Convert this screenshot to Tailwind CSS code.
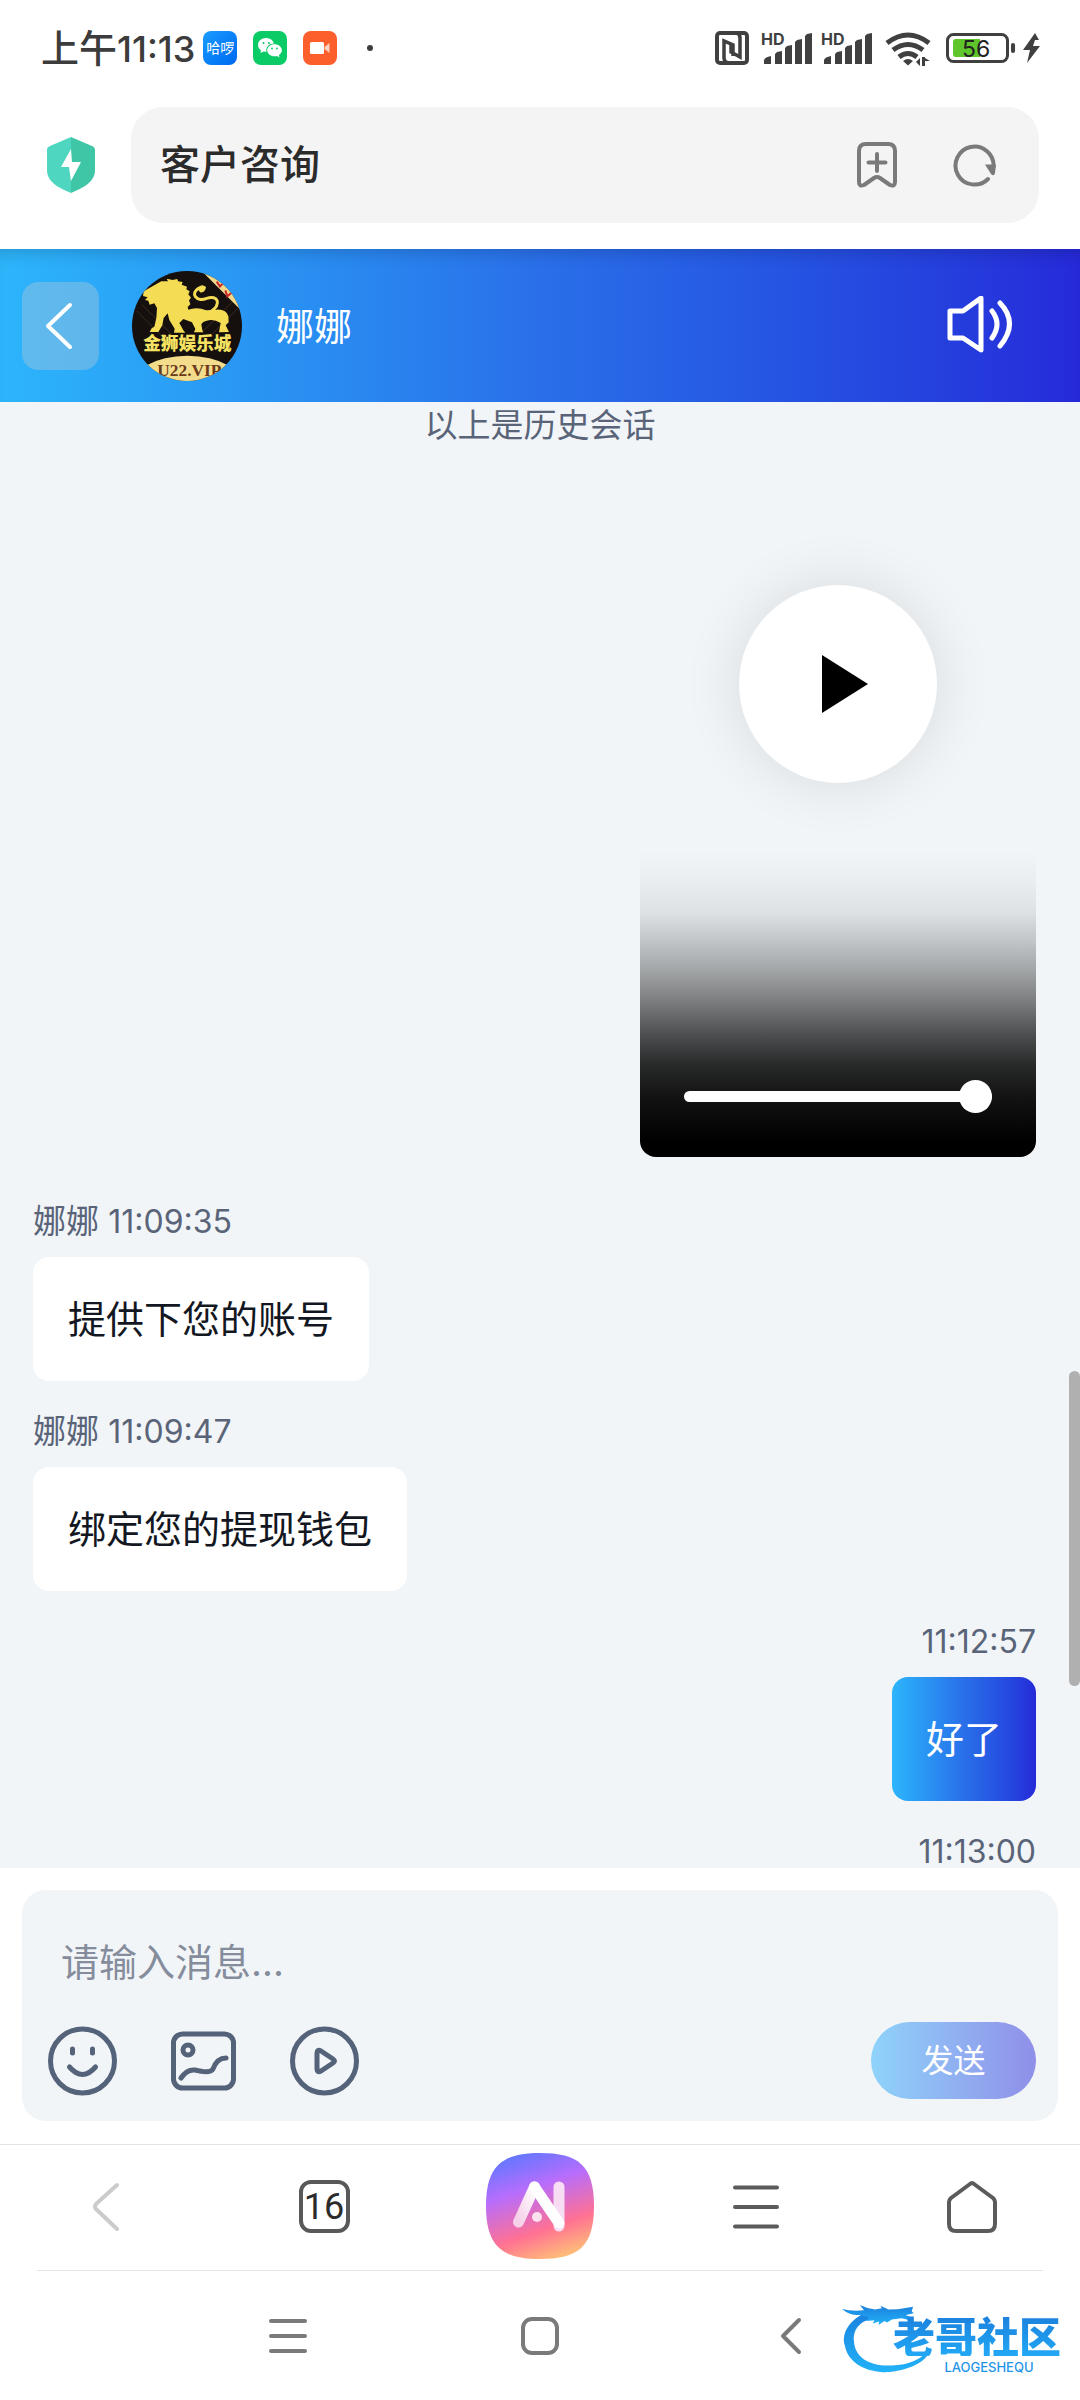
<!DOCTYPE html>
<html lang="zh-CN">
<head>
<meta charset="utf-8">
<meta name="viewport" content="width=device-width, initial-scale=1">
<title>客户咨询</title>
<script src="https://cdn.jsdelivr.net/npm/@tailwindcss/browser@4"></script>
</head>
<body class="flex h-screen flex-col overflow-hidden bg-white font-[Inter,'Noto_Sans_CJK_SC',sans-serif] text-[#2b2b2b]">

  <!-- Status bar -->
  <div class="flex h-24 shrink-0 items-center justify-between pr-10 pl-[41px]">
    <div class="flex items-center">
      <span class="mr-2 text-[38px] leading-[48px] font-medium text-[#3c3c3c]">上午<span class="text-[36px]">11:13</span></span>
      <div class="flex items-center gap-4">
        <span class="flex size-[34px] items-center justify-center rounded-lg bg-linear-to-br from-[#1d9bff] to-[#0068f0] text-[14px] leading-none text-white">哈啰</span>
        <svg class="size-[34px]" viewBox="0 0 34 34"><rect width="34" height="34" rx="8" fill="#0acb65"/><g fill="#fff"><path d="M13 7C8.500 7 5 10 5 14c0 2.200 1.200 4 3 5.200l-.6 2.800 3.200-1.500c1 .2 1.800.3 2.800.3-.8-5.300 3.500-8.500 7.500-8.300C20 9.300 17 7 13 7z"/><path d="M21.500 13.300c-4.200 0-7.300 2.700-7.300 6s3.100 6 7.300 6c.9 0 1.700-.1 2.500-.3l2.500 1.400-.6-2.500c1.900-1.100 3-2.700 3-4.600 0-3.300-3.200-6-7.400-6z"/></g><g fill="#0acb65"><circle cx="10.500" cy="12" r="1"/><circle cx="16" cy="12" r="1"/><circle cx="19" cy="17.500" r=".9"/><circle cx="24" cy="17.500" r=".9"/></g></svg>
        <svg class="size-[34px]" viewBox="0 0 34 34"><rect width="34" height="34" rx="8" fill="#fc5f2b"/><rect x="7" y="11" width="14" height="12" rx="1.500" fill="#fff"/><path d="M21.500 16l5-4v10l-5-4z" fill="#ffd0bd"/></svg>
      </div>
      <span class="ml-[30px] size-[6px] rounded-full bg-[#3c3c3c]"></span>
    </div>
    <svg class="h-9 w-[326px]" viewBox="714 30 326 36" fill="#404040">
      <rect x="717" y="33" width="30" height="30" rx="3" fill="none" stroke="#404040" stroke-width="4"/>
      <path d="M728 63q-4-1-4-5V41l9 4v11M737 33q3 1 3 5v19l-9-5v-9" fill="none" stroke="#404040" stroke-width="3.500"/>
      <g id="sig"><text x="761" y="44.500" font-family="Inter" font-size="16" font-weight="700">HD</text>
      <path d="M764 64v-4q1-3 7-4v8zM775 64V54l2-2 5-1v13zM785 64V48l2-2 5-1v19zM795 64V42l2-2 5-1v25zM805 64V36l2-2 5-1v31z"/></g>
      <use href="#sig" x="60"/>
      <g fill="none" stroke="#404040" stroke-width="5"><path d="M887 43q21-16 42 0"/><path d="M893 50q15-11 30 0"/><path d="M899 57q9-7 18 0"/></g>
      <path d="M903 61q5-4 10 0l-5 4.500zM920 58v8l-4-4zM922 66V57l0 0 3 0v9zM925 58l5 3h-5z"/>
      <rect x="947.500" y="34.500" width="60" height="27" rx="6" fill="none" stroke="#404040" stroke-width="3"/>
      <path d="M956 39h24v18h-24q-3 0-3-3V42q0-3 3-3z" fill="#5ec62a"/>
      <text x="962" y="57" font-family="Inter" font-size="23" fill="#222">56</text>
      <rect x="1011" y="43" width="4" height="10" rx="2"/>
      <path d="M1035 33l-12 17h7l-3 13 13-17h-7l2-6h4z"/>
    </svg>
  </div>

  <!-- Browser address bar -->
  <div class="flex shrink-0 items-center pt-[11px] pr-[41px] pb-[26px] pl-[47px]">
    <svg class="h-[56px] w-[48px] shrink-0" viewBox="0 0 48 56"><path d="M24 0l21 9q3 1 3 4v20c0 12-12 18-24 23z" fill="#3fc6a6"/><path d="M24 0L3 9Q0 10 0 13v20c0 12 12 18 24 23z" fill="#4fd6c0"/><path d="M24 12L14 30h8l2 14 10-19h-9z" fill="#fff"/></svg>
    <div class="ml-9 flex h-[116px] flex-1 items-center rounded-[32px] bg-[#f4f4f4] pr-[41px] pl-[29px]">
      <h1 class="flex-1 text-[40px] leading-[52px] font-medium">客户咨询</h1>
      <button aria-label="收藏" class="mr-[54px]"><svg class="h-[48px] w-[42px]" viewBox="0 0 42 48" fill="none" stroke="#7a7a7a" stroke-width="4" stroke-linecap="round" stroke-linejoin="round"><path d="M3 10q0-7 7-7h22q7 0 7 7v31q0 5-5 3l-10-7q-3-2-6 0l-10 7q-5 2-5-3zM21 13v17M12.500 21.500h17"/></svg></button>
      <button aria-label="刷新"><svg class="size-[46px]" viewBox="0 0 46 46" fill="none"><path d="M36 37A19 19 0 1 1 41.500 25" stroke="#7a7a7a" stroke-width="4" stroke-linecap="round"/><path d="M33 22.500h11l-1 8.500q-1 4-4 1z" fill="#7a7a7a"/></svg></button>
    </div>
  </div>

  <!-- Agent header -->
  <header class="flex h-[153px] shrink-0 items-center bg-linear-to-r from-[#2db5fb] via-[#2a6fe9] to-[#2629d9] pr-[66px] pl-[22px] shadow-[inset_0_14px_18px_-12px_rgba(0,0,0,0.2)]">
    <button aria-label="返回" class="flex h-[88px] w-[77px] items-center justify-center rounded-2xl bg-[#9fc6dc]/45">
      <svg class="h-[48px] w-[34px]" viewBox="0 0 34 48" fill="none" stroke="#fff" stroke-width="4" stroke-linecap="round" stroke-linejoin="round"><path d="M26 3L4 24l22 21"/></svg>
    </button>
    <svg class="ml-[33px] size-[110px] rounded-full" viewBox="396 90 330 330" role="img" aria-label="金狮娱乐城">
      <rect x="396" y="90" width="330" height="330" fill="#15100d"/>
      <path d="M410 210l75 75M425 190l90 90M716 200l-80 80M700 180l-90 90" stroke="#5b452a" stroke-width="3" opacity=".6"/>
      <path d="M605 90l121 121V90z" fill="#f3d98a"/>
      <path d="M650 122l10 14 12-12M676 148l6 18 14-12M664 118l4 10" stroke="#c8262a" stroke-width="6" fill="none"/>
      <g fill="#f5dc55">
        <path d="M484 121l20 0-4-8 18 4 14-3 2 7 14 2-3 8 16 6-2 8 10 6-4 9 8 10-6 8 4 12-8 8 2 8q25-10 54 2 15-2 30-2 30-2 36 20l1 18-9 9 10 20-30 1 2-12 3-16q-20-12-36-8-18 3-22 12l3 18 3 6-28 0 4-10-10-20-26-10-12 12 12 22 6 7-34 0 2-12-16-26-5-20-12 14-4 22-12 20-26 0 6-11 8-5 6-26 2-30-8-14-14 4-4-12-10-2 8-8-14-4 2-14z"/>
        <path d="M632 212C665 190 655 160 620 172C588 185 570 156 596 142" fill="none" stroke="#f5dc55" stroke-width="9" stroke-linecap="round"/>
        <path d="M592 140q14-14 26-2-2 18-18 16z"/>
      </g>
      <ellipse cx="562" cy="445" rx="175" ry="101" fill="#f3dd8c"/>
      <text x="562" y="328" text-anchor="middle" font-family="Noto Sans CJK SC" font-weight="900" font-size="53" fill="#f5e262">金狮娱乐城</text>
      <text x="568" y="406" text-anchor="middle" font-family="Liberation Serif" font-weight="700" font-size="52" fill="#6b3a1a">U22.VIP</text>
    </svg>
    <h2 class="ml-[34px] flex-1 text-[38px] leading-[52px] text-white">娜娜</h2>
    <button aria-label="声音"><svg class="h-[60px] w-[68px]" viewBox="0 2 68 60" fill="none" stroke="#fff" stroke-width="5" stroke-linecap="round" stroke-linejoin="round"><path d="M4 17h13L35 4v52L17 44H4z"/><path d="M46 17q10 13 0 27M54 9q19 20 0 43"/></svg></button>
  </header>

  <!-- Conversation -->
  <main class="relative flex min-h-0 flex-1 flex-col overflow-hidden bg-[#f1f5f8] pt-1 pr-[44px] pl-[33px] text-[33px] text-[#5a6478]">
    <p class="pl-[11px] text-center leading-[38px]">以上是历史会话</p>

    <section aria-label="视频" class="mt-[141px] flex w-[396px] shrink-0 flex-col items-center self-end">
      <button aria-label="播放" class="flex size-[198px] items-center justify-center rounded-full bg-white shadow-[0_0_60px_rgba(0,0,0,0.11)]">
        <svg class="ml-[14px] h-[58px] w-[46px]" viewBox="0 0 46 58"><path d="M0 0l46 29L0 58z" fill="#000"/></svg>
      </button>
      <div class="mt-[67px] flex h-[307px] w-full items-end rounded-b-2xl bg-[linear-gradient(to_bottom,rgba(0,0,0,0)_0%,rgba(0,0,0,0.03)_10%,rgba(0,0,0,0.08)_20%,rgba(0,0,0,0.2)_30%,rgba(0,0,0,0.34)_40%,rgba(0,0,0,0.5)_50%,rgba(0,0,0,0.68)_60%,rgba(0,0,0,0.83)_70%,rgba(0,0,0,0.92)_80%,#000_95%)] p-11">
        <input type="range" min="0" max="100" value="100" aria-label="播放进度" class="h-[33px] w-full appearance-none bg-transparent [&::-webkit-slider-runnable-track]:h-[11px] [&::-webkit-slider-runnable-track]:rounded-full [&::-webkit-slider-runnable-track]:bg-white [&::-webkit-slider-thumb]:-mt-[11px] [&::-webkit-slider-thumb]:size-[33px] [&::-webkit-slider-thumb]:appearance-none [&::-webkit-slider-thumb]:rounded-full [&::-webkit-slider-thumb]:bg-white">
      </div>
    </section>

    <div class="mt-11 flex shrink-0 flex-col gap-[30px]">
      <article class="flex flex-col items-start gap-[15px]">
        <p class="leading-[40px]">娜娜 <time class="text-[32px]">11:09:35</time></p>
        <p class="rounded-2xl bg-white px-[35px] py-9 text-[38px] leading-[52px] text-[#131722]">提供下您的账号</p>
      </article>
      <article class="flex flex-col items-start gap-[15px]">
        <p class="leading-[40px]">娜娜 <time class="text-[32px]">11:09:47</time></p>
        <p class="rounded-2xl bg-white px-[35px] py-9 text-[38px] leading-[52px] text-[#131722]">绑定您的提现钱包</p>
      </article>
      <article class="flex flex-col items-end gap-[15px]">
        <p class="leading-[40px]"><time class="text-[32px]">11:12:57</time></p>
        <p class="rounded-2xl bg-linear-to-r from-[#2db5fb] via-[#2a6fe9] to-[#2629d9] px-[34px] py-9 text-[38px] leading-[52px] text-white">好了</p>
      </article>
      <article class="flex flex-col items-end">
        <p class="leading-[40px]"><time class="text-[32px]">11:13:00</time></p>
      </article>
    </div>

    <!-- Scroll thumb -->
    <div class="absolute top-[969px] right-0 h-[315px] w-[11px] rounded-full bg-[#b0b0b0]"></div>
  </main>

  <!-- Composer -->
  <form class="shrink-0 bg-white px-[22px] pt-[22px] pb-[23px]">
    <div class="rounded-3xl bg-[#f1f5f8] pt-[46px] pr-[22px] pb-[22px] pl-[26px]">
      <textarea rows="1" aria-label="消息" placeholder="请输入消息..." class="block h-[54px] w-full resize-none overflow-hidden pl-[13px] text-[38px] leading-[52px] outline-none placeholder:text-[#858c9b]"></textarea>
      <div class="mt-8 flex h-[77px] items-center gap-[51px] text-[#54627a]">
        <button type="button" aria-label="表情"><svg class="size-[70px]" viewBox="0 0 70 70" fill="none" stroke="currentColor" stroke-width="5" stroke-linecap="round"><circle cx="34.500" cy="35" r="32"/><path d="M24.500 23v4M44.500 23v4"/><path d="M21.500 41q13 15 26 0"/></svg></button>
        <button type="button" aria-label="图片"><svg class="size-[70px]" viewBox="0 0 70 70" fill="none" stroke="currentColor" stroke-width="5" stroke-linecap="round"><rect x="4.500" y="8" width="60" height="54" rx="9"/><circle cx="19" cy="24" r="5"/><path d="M12 52q6-9 14-8 15 4 18-1 4-11 13-11"/></svg></button>
        <button type="button" aria-label="视频"><svg class="size-[70px]" viewBox="0 0 70 70" fill="none" stroke="currentColor" stroke-width="5" stroke-linejoin="round"><circle cx="34.500" cy="35" r="32"/><path d="M27 27q0-4 4-2l12 8q3 2 0 4l-12 8q-4 2-4-2z"/></svg></button>
        <button type="submit" class="ml-auto h-[77px] w-[165px] rounded-full bg-linear-to-r from-[#8ed3fa] to-[#8f8fe8] text-[32px] text-white">发送</button>
      </div>
    </div>
  </form>

  <!-- Browser toolbar -->
  <nav aria-label="浏览器" class="shrink-0 border-t border-[#e4e4e4]">
    <div class="grid h-[125px] grid-cols-5 place-items-center pb-[2px]">
      <button aria-label="后退"><svg class="h-[50px] w-[32px]" viewBox="0 0 32 50" fill="none" stroke="#cbcbcb" stroke-width="4" stroke-linecap="round"><path d="M25 3L4 22q-2 3 0 5l21 20"/></svg></button>
      <button class="h-[53px] w-[51px] rounded-xl border-[4px] border-[#595959] font-[Roboto,sans-serif] text-[36px] leading-none">16</button>
      <button aria-label="AI"><svg class="h-[108px] w-[108px]" viewBox="0 2 108 108">
        <defs>
          <linearGradient id="ai" x1=".3" y1="0" x2=".65" y2="1"><stop offset="0" stop-color="#6277ff"/><stop offset=".33" stop-color="#b86dfc"/><stop offset=".72" stop-color="#ff7193"/><stop offset="1" stop-color="#ffbd78"/></linearGradient>
          <linearGradient id="leg" x1="1" y1="0" x2="0" y2="1"><stop offset="0" stop-color="#fff"/><stop offset="1" stop-color="#f6cfe8"/></linearGradient>
        </defs>
        <path d="M54 2C92 2 108 14 108 55s-16 53-54 53S0 95 0 55 16 2 54 2z" fill="url(#ai)"/>
        <g fill="none" stroke-linecap="round" stroke-linejoin="round" stroke-width="11"><path d="M73 36v39" stroke="#f7ddf3"/><path d="M48.500 36L32.500 71" stroke="url(#leg)"/><path d="M48.500 36L73 72" stroke="#fff"/></g>
        <circle cx="51" cy="66" r="5" fill="#fbe0ee"/>
      </svg></button>
      <button aria-label="菜单"><svg class="size-[48px]" viewBox="0 0 48 48" stroke="#5b5b5b" stroke-width="4" stroke-linecap="round"><path d="M3 4.500h42M3 24h42M3 43.500h42"/></svg></button>
      <button aria-label="主页"><svg class="h-[54px] w-[52px]" viewBox="0 0 52 54" fill="none" stroke="#5b5b5b" stroke-width="4" stroke-linejoin="round"><path d="M24 4q2-2 4 0l19 14q2 2 2 4v22q0 7-7 7H10q-7 0-7-7V22q0-2 2-4z"/></svg></button>
    </div>
    <div class="mx-[37px] border-t border-[#e4e4e4]"></div>
  </nav>

  <!-- System navigation -->
  <nav aria-label="系统" class="relative shrink-0">
    <div class="grid h-[129px] grid-cols-3 place-items-center px-[15%]">
      <button aria-label="最近任务"><svg class="h-[36px] w-[38px]" viewBox="0 0 38 36" stroke="#7a7a7a" stroke-width="4" stroke-linecap="round"><path d="M2 3h34M2 18h34M2 33h34"/></svg></button>
      <button aria-label="桌面"><svg class="size-[38px]" viewBox="0 0 38 38" fill="none" stroke="#7a7a7a" stroke-width="4"><rect x="2" y="2" width="34" height="34" rx="9"/></svg></button>
      <button aria-label="系统返回"><svg class="h-[38px] w-[24px]" viewBox="0 0 24 38" fill="none" stroke="#7a7a7a" stroke-width="4" stroke-linecap="round" stroke-linejoin="round"><path d="M19 3L3 19l16 16"/></svg></button>
    </div>
    <!-- Community watermark -->
    <div class="absolute right-[19px] bottom-[22px] flex h-[80px] w-[221px]">
      <svg class="h-[78px] w-[93px]" viewBox="300 85 280 235">
        <defs><linearGradient id="wm" x1="0" y1="0" x2="0" y2="1"><stop offset="0" stop-color="#1a7fdc"/><stop offset="1" stop-color="#22b2f8"/></linearGradient></defs>
        <g fill="url(#wm)"><path d="M400 120C335 140 300 190 315 230C325 285 390 312 450 308C515 300 568 275 572 235C550 270 500 290 450 288C390 290 345 265 342 215C338 180 360 150 410 145Z"/>
        <path d="M306 118q30 8 66 4l-12-16q24 12 46 14l20-4-4-8 24 12 28-1 46-8-4 14 6 6-24 5 20 9-6 8-26-7-30 4-14 9-8-5-18 12 2-10-20 6 6-10-26 2 10-10-28-8q-30 3-54-18z"/></g>
      </svg>
      <div class="absolute right-0 bottom-1 flex flex-col items-center text-[#1f95e8]">
        <span class="bg-linear-to-b from-[#1c7fdc] to-[#22a8f5] bg-clip-text font-['Noto_Sans_CJK_SC',sans-serif] text-[42px] leading-[42px] font-black text-transparent">老哥社区</span>
        <span class="mt-1 pl-6 text-[13px] leading-[14px] font-medium">LAOGESHEQU</span>
      </div>
    </div>
  </nav>
</body>
</html>
